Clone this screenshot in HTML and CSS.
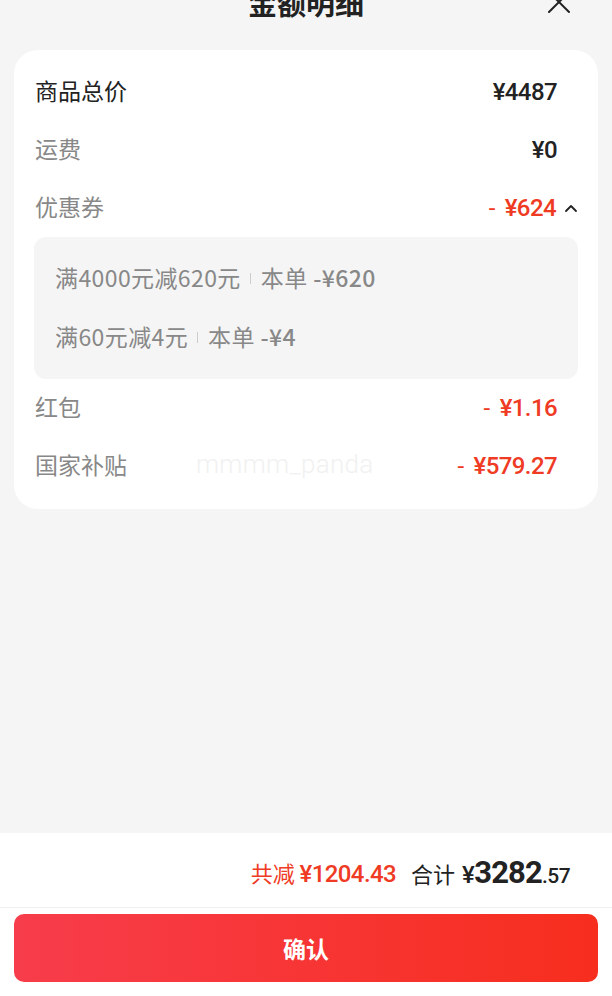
FILE: index.html
```html
<!DOCTYPE html>
<html lang="zh-CN">
<head>
<meta charset="utf-8">
<title>金额明细</title>
<link rel="stylesheet" href="styles.css">
</head>
<body>
<div class="page">
  <header class="header">
    <span></span>
    <h1 class="title">金额明细</h1>
    <svg class="close" width="24" height="24" viewBox="0 0 24 24" aria-hidden="true">
      <path d="M2 2 L22 22 M22 2 L2 22" stroke="#222" stroke-width="2" fill="none" stroke-linecap="round"/>
    </svg>
  </header>

  <main class="main">
    <section class="card">
      <div class="row">
        <span class="label dark">商品总价</span>
        <span class="value dark num">¥4487</span>
      </div>
      <div class="row">
        <span class="label">运费</span>
        <span class="value dark num">¥0</span>
      </div>
      <div class="row">
        <span class="label">优惠券</span>
        <span class="value red num with-caret"><span class="dash">-</span> ¥624
          <svg class="caret" width="14" height="10" viewBox="0 0 14 10" aria-hidden="true">
            <path d="M2 8 L7 3 L12 8" stroke="#222" stroke-width="1.8" fill="none" stroke-linecap="round" stroke-linejoin="round"/>
          </svg>
        </span>
      </div>
      <div class="coupons">
        <div class="coupon">满4000元减620元<span class="sep"></span>本单 <span class="amt">-¥620</span></div>
        <div class="coupon">满60元减4元<span class="sep"></span>本单 <span class="amt">-¥4</span></div>
      </div>
      <div class="row">
        <span class="label">红包</span>
        <span class="value red num"><span class="dash">-</span> ¥1.16</span>
      </div>
      <div class="row">
        <span class="label">国家补贴</span>
        <span class="watermark">mmmm_panda</span>
        <span class="value red num"><span class="dash">-</span> ¥579.27</span>
      </div>
    </section>
  </main>

  <footer class="footer">
    <div class="summary">
      <span class="saved">共减 <span class="num">¥1204.43</span></span>
      <span class="total">合计 <span class="num yen">¥</span><span class="num big">3282</span><span class="num small">.57</span></span>
    </div>
    <div class="action">
      <button class="confirm">确认</button>
    </div>
  </footer>
</div>
</body>
</html>
```

FILE: styles.css
```css
* { box-sizing: border-box; }
html, body { margin: 0; padding: 0; }
body {
  background: #f5f5f5;
  font-family: "Noto Sans CJK SC", "Noto Sans", sans-serif;
  color: #222;
}
.page {
  height: 996px;
  display: flex;
  flex-direction: column;
  overflow: hidden;
}
.header {
  display: grid;
  grid-template-columns: 1fr auto 1fr;
  align-items: center;
  height: 30px;
  margin-top: -13px;
  margin-bottom: 33px;
}
.title {
  margin: 0;
  font-size: 29px;
  font-weight: 700;
  line-height: 30px;
  color: #222;
}
.close {
  justify-self: end;
  margin-right: 41px;
}
.main {
  flex: 1;
  padding: 0 14px;
}
.card {
  background: #fff;
  border-radius: 24px;
  padding: 13px 20px 14px;
}
.row {
  height: 58px;
  display: flex;
  align-items: center;
  justify-content: space-between;
  position: relative;
}
.label {
  font-size: 23px;
  line-height: 1;
  color: #888;
  padding-left: 1px;
  padding-bottom: 3px;
}
.label.dark, .value.dark { color: #222; }
.value {
  font-size: 24px;
  font-weight: 500;
  margin-right: 21px;
  display: flex;
  align-items: center;
  gap: 6px;
}
.value.with-caret { margin-right: 0; gap: 6px; }
.caret { margin-left: 2px; }
.num {
  font-family: Roboto, "Liberation Sans", sans-serif;
  font-weight: 500;
  letter-spacing: -0.6px;
}
.red { color: #ef3a24; }
.dash { font-weight: 400; margin-right: 4px; }
.watermark {
  position: absolute;
  left: 162px;
  top: 12px;
  font-family: Roboto, sans-serif;
  font-weight: 300;
  font-size: 26px;
  color: #f1f1f1;
  letter-spacing: 0.3px;
}
.coupons {
  background: #f5f5f5;
  border-radius: 12px;
  padding: 12px 21px;
}
.coupon {
  height: 59px;
  display: flex;
  align-items: center;
  font-size: 23px;
  letter-spacing: 0.4px;
  line-height: 1;
  color: #888;
  white-space: pre;
  padding-bottom: 2px;
}
.coupon .amt { font-weight: 500; }
.sep {
  display: inline-block;
  width: 1px;
  height: 11px;
  background: #ccc;
  margin: 2px 10px 0 9px;
}
.footer {
  background: #fff;
}
.summary {
  height: 75px;
  display: flex;
  align-items: center;
  justify-content: flex-end;
  gap: 15px;
  padding: 4px 42px 0 0;
  border-bottom: 1px solid #f0f0f0;
}
.saved {
  color: #ef3a24;
  font-size: 22px;
  white-space: pre;
}
.saved .num { font-size: 24px; }
.total {
  font-size: 22px;
  color: #222;
  display: flex;
  align-items: baseline;
  white-space: pre;
}
.total .yen { font-size: 24px; margin-left: 2px; }
.total .big { font-size: 31px; font-weight: 700; letter-spacing: -0.8px; }
.total .small { font-size: 21px; }
.action {
  padding: 6px 14px 14px 14px;
}
.confirm {
  display: block;
  width: 100%;
  height: 68px;
  border: 0;
  border-radius: 10px;
  background: linear-gradient(90deg, #f73c4b 0%, #f72e1e 100%);
  color: #fff;
  font-family: "Noto Sans CJK SC", sans-serif;
  font-size: 23px;
  font-weight: 700;
}
```
